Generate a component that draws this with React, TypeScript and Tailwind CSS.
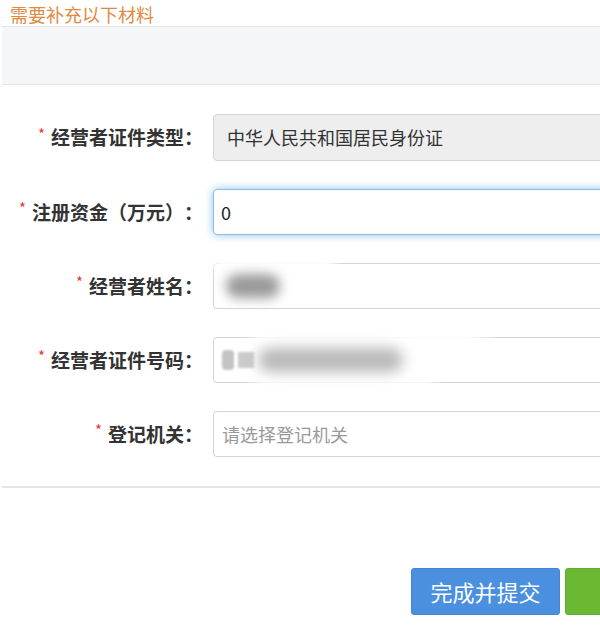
import React from "react";

const font = { fontFamily: '"Noto Sans CJK SC", "Noto Sans", sans-serif' };

function Label({ text }: { text: string }) {
  return (
    <div className="w-[203px] shrink-0 flex items-center justify-end text-[19px] font-bold text-[#333]">
      <span className="text-[#e4393c] text-[15px] mr-[6px] -mt-[7px] font-normal">*</span>
      <span>{text}</span>
      <span>：</span>
    </div>
  );
}

export default function App() {
  return (
    <div className="w-[600px] h-[626px] bg-white overflow-hidden relative" style={font}>
      <div className="pl-[10px] h-[26px] pt-[4px] text-[18px] leading-[20px] text-[#e08a3f]">需要补充以下材料</div>
      <div className="ml-[2px] h-[59px] bg-[#f5f6f8] border-t border-b border-[#e3e5e8]" />
      <div className="pt-[29px] flex flex-col gap-[28px]">
        <div className="flex items-center gap-[10px]">
          <Label text="经营者证件类型" />
          <div className="w-[420px] h-[47px] shrink-0 rounded-[4px] border border-[#d4d4d4] bg-[#eeeeee] flex items-center pl-[13px] text-[18px] text-[#333]">
            中华人民共和国居民身份证
          </div>
        </div>
        <div className="flex items-center gap-[10px]">
          <Label text="注册资金（万元）" />
          <div className="w-[420px] h-[46px] shrink-0 rounded-[4px] border border-[#8ebde9] bg-white flex items-center pl-[7px] text-[18px] text-[#222] shadow-[0_0_8px_rgba(102,175,233,0.75)]">
            0
          </div>
        </div>
        <div className="flex items-center gap-[10px]">
          <Label text="经营者姓名" />
          <div className="relative w-[420px] h-[46px] shrink-0 rounded-[4px] border border-[#d4d4d4] bg-white flex items-center pl-[12px]">
            <div className="absolute -top-[10px] left-[0px] w-[120px] h-[20px] bg-white blur-[6px]" />
            <div className="w-[54px] h-[24px] rounded-full bg-[#9a9a9a] blur-[6px]" />
          </div>
        </div>
        <div className="flex items-center gap-[10px]">
          <Label text="经营者证件号码" />
          <div className="relative w-[420px] h-[46px] shrink-0 rounded-[4px] border border-[#d4d4d4] bg-white flex items-center pl-[8px] gap-[4px]">
            <div className="absolute -top-[12px] left-[40px] w-[230px] h-[24px] bg-white blur-[8px]" />
            <div className="absolute -bottom-[12px] left-[40px] w-[180px] h-[20px] bg-white blur-[8px]" />
            <div className="w-[12px] h-[20px] rounded-[4px] bg-[#c4c4c4] blur-[1px]" />
            <div className="w-[16px] h-[16px] bg-[#cccccc] blur-[1px]" />
            <div className="w-[145px] h-[24px] rounded-full bg-[#b8b8b8] blur-[7px]" />
          </div>
        </div>
        <div className="flex items-center gap-[10px]">
          <Label text="登记机关" />
          <div className="w-[420px] h-[46px] shrink-0 rounded-[4px] border border-[#d4d4d4] bg-white flex items-center pl-[8px] text-[18px] text-[#999]">
            请选择登记机关
          </div>
        </div>
      </div>
      <div className="mt-[29px] ml-[2px] h-[2px] bg-[#e6e6e6]" />
      <div className="mt-[80px] flex justify-end gap-[5px] -mr-[40px]">
        <button className="w-[149px] h-[47px] rounded-[3px] bg-[#4a90df] text-white text-[22px] border border-[#4385d6]">完成并提交</button>
        <button className="w-[75px] h-[47px] rounded-[3px] bg-[#6bb834] border border-[#62ac2e]" />
      </div>
    </div>
  );
}
